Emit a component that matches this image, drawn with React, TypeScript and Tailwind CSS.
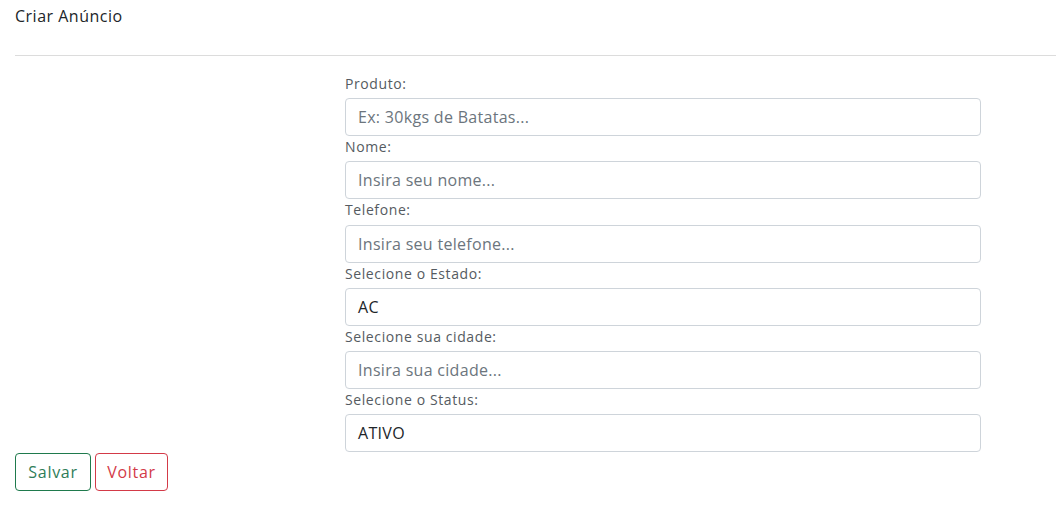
import React from "react";

const font = { fontFamily: '"Open Sans", "Noto Sans", sans-serif' };

function Field({ label, placeholder, value }: { label: string; placeholder?: string; value?: string }) {
  return (
    <div className="flex flex-col">
      <label className="text-[14px] leading-[21.2px] tracking-[0.6px] text-[#555b61] mb-[4px]">{label}</label>
      <div className="h-[38px] border border-[#ced4da] rounded-[4px] flex items-center px-[12px] text-[16px] tracking-[0.3px]">
        {value ? (
          <span className="text-[#212529]">{value}</span>
        ) : (
          <span className="text-[#6c757d]">{placeholder}</span>
        )}
      </div>
    </div>
  );
}

export default function App() {
  return (
    <div className="w-[1056px] h-[516px] bg-white text-[#212529]" style={font}>
      <div className="pl-[15px] pt-[5px] h-[55px]">
        <h1 className="text-[16px] leading-[22px] tracking-[0.5px] font-normal">Criar Anúncio</h1>
      </div>
      <div className="ml-[15px] h-px bg-[#dcdcdc]" />
      <div className="ml-[345px] w-[636px] mt-[17px]">
        <Field label="Produto:" placeholder="Ex: 30kgs de Batatas..." />
        <Field label="Nome:" placeholder="Insira seu nome..." />
        <Field label="Telefone:" placeholder="Insira seu telefone..." />
        <Field label="Selecione o Estado:" value="AC" />
        <Field label="Selecione sua cidade:" placeholder="Insira sua cidade..." />
        <Field label="Selecione o Status:" value="ATIVO" />
      </div>
      <div className="flex gap-[4px] pl-[15px] mt-[1px]">
        <button className="h-[38px] border border-[#1f7a4d] text-[#2f7d58] rounded-[4px] text-[16px] tracking-[0.7px] w-[76px]">Salvar</button>
        <button className="h-[38px] border border-[#d33a48] text-[#d33a48] rounded-[4px] text-[16px] tracking-[0.7px] w-[73px]">Voltar</button>
      </div>
    </div>
  );
}
